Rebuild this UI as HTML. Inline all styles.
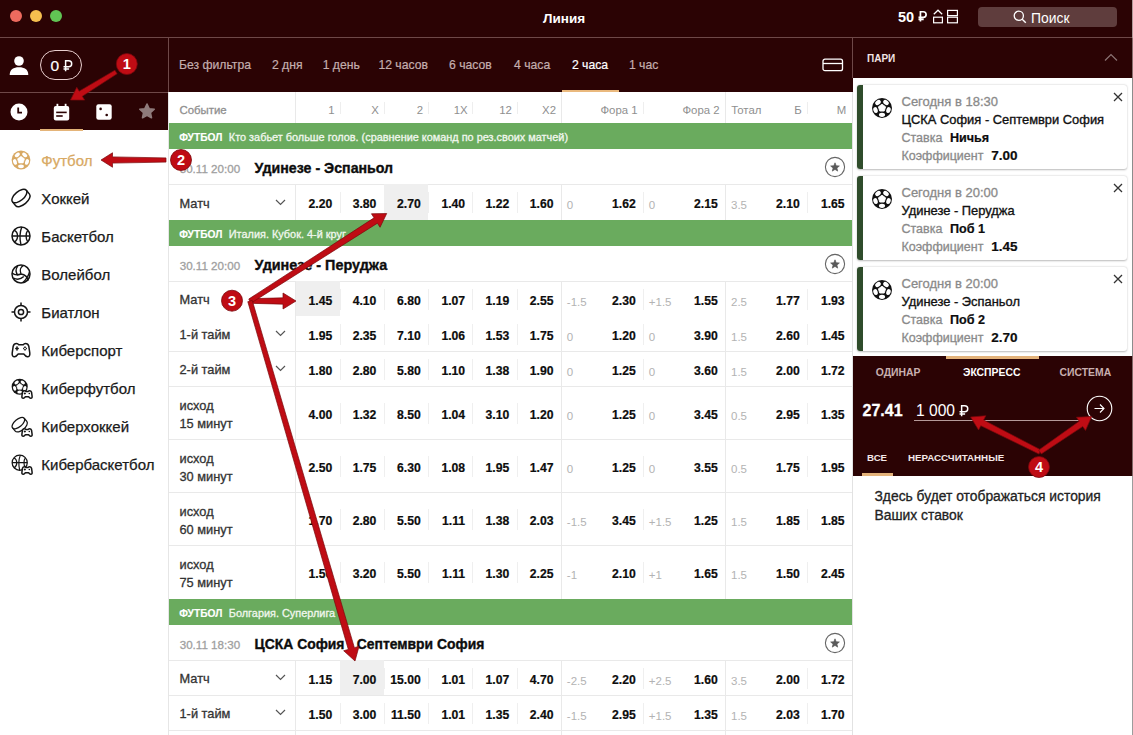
<!DOCTYPE html><html><head><meta charset="utf-8"><style>
*{margin:0;padding:0;box-sizing:border-box}
html,body{width:1133px;height:735px;overflow:hidden;background:#fff;font-family:"Liberation Sans",sans-serif;position:relative}
.a{position:absolute}
.nw{white-space:nowrap}
.rub{position:relative;display:inline-block;line-height:1;transform:scaleX(.84);transform-origin:0 50%}
.rub:after{content:"";position:absolute;left:-0.07em;width:0.55em;top:0.645em;height:0.085em;background:currentColor}
.cell{position:absolute;white-space:nowrap;text-align:right}
</style></head><body>
<div class="a" style="left:0;top:0;width:1133px;height:38px;background:#2b0304"></div>
<div class="a" style="left:0;top:37px;width:1133px;height:1px;background:#6e4848"></div>
<div class="a" style="left:10px;top:10px;width:12px;height:12px;border-radius:50%;background:#ed6a5e"></div>
<div class="a" style="left:30px;top:10px;width:12px;height:12px;border-radius:50%;background:#f5bf4f"></div>
<div class="a" style="left:50px;top:10px;width:12px;height:12px;border-radius:50%;background:#61c554"></div>
<div class="a nw" style="left:543px;top:10.5px;font-size:13.5px;font-weight:700;color:#fff">Линия</div>
<div class="a nw" style="left:898px;top:9px;font-size:14.5px;font-weight:700;color:#fff">50 <svg style="display:inline-block;height:0.729em;width:0.6em;vertical-align:0;overflow:visible" viewBox="0 0 10.5 13"><path d="M2.9 13 V0.9 H6.4 C8.7 0.9 9.9 2.5 9.9 4.35 C9.9 6.2 8.7 7.8 6.4 7.8 H0.5 M0.5 10.3 H6.9" fill="none" stroke="currentColor" stroke-width="2.1"/></svg></div>
<svg class="a" style="left:932px;top:9px" width="28" height="15" viewBox="0 0 28 15"><path d="M1.8 5.2 L6 1.2 L10.2 5.2" fill="none" stroke="#fff" stroke-width="1.2"/><rect x="1.6" y="8.2" width="8.8" height="5.6" fill="none" stroke="#fff" stroke-width="1.2"/><rect x="15.6" y="1.4" width="9.8" height="5.2" fill="none" stroke="#fff" stroke-width="1.2"/><rect x="15.6" y="8.2" width="9.8" height="5.6" fill="none" stroke="#fff" stroke-width="1.2"/></svg>
<div class="a" style="left:978px;top:7px;width:139px;height:20px;border-radius:4px;background:#5f3d3d"></div>
<svg class="a" style="left:1013px;top:10px" width="14" height="14" viewBox="0 0 14 14"><circle cx="5.8" cy="5.8" r="4.6" fill="none" stroke="#fff" stroke-width="1.3"/><path d="M9.2 9.2 L12.8 12.8" stroke="#fff" stroke-width="1.4"/></svg>
<div class="a nw" style="left:1031px;top:9.6px;font-size:13.9px;color:#fff">Поиск</div>
<div class="a" style="left:0;top:38px;width:168px;height:92px;background:#2b0304"></div>
<div class="a" style="left:0;top:92px;width:168px;height:1px;background:#6e4848"></div>
<div class="a" style="left:168px;top:38px;width:1px;height:54px;background:#6e4848"></div>
<div class="a" style="left:168px;top:92px;width:1px;height:643px;background:#e6e6e6"></div>
<svg class="a" style="left:9px;top:55px" width="20" height="21" viewBox="0 0 20 21"><circle cx="10" cy="6" r="4.8" fill="#fff"/><path d="M0.7 20 C0.7 14.5 4.5 12.3 10 12.3 C15.5 12.3 19.3 14.5 19.3 20 Z" fill="#fff"/></svg>
<div class="a" style="left:40px;top:50px;width:42px;height:30px;border:1px solid #e9cfcf;border-radius:15px"></div>
<div class="a nw" style="left:50.5px;top:57px;font-size:15.5px;color:#fff;-webkit-text-stroke:0.2px #fff">0 <svg style="display:inline-block;height:0.729em;width:0.6em;vertical-align:0;overflow:visible" viewBox="0 0 10.5 13"><path d="M2.9 13 V0.9 H6.4 C8.7 0.9 9.9 2.5 9.9 4.35 C9.9 6.2 8.7 7.8 6.4 7.8 H0.5 M0.5 10.3 H6.9" fill="none" stroke="currentColor" stroke-width="1.7"/></svg></div>
<svg class="a" style="left:10px;top:103px" width="18" height="18" viewBox="0 0 18 18"><circle cx="9" cy="9" r="8.5" fill="#fff"/><path d="M8.2 4.5 V9.6 H12" fill="none" stroke="#2b0304" stroke-width="1.8"/></svg>
<svg class="a" style="left:53px;top:103px" width="17" height="18" viewBox="0 0 17 18"><rect x="0.8" y="3" width="15.4" height="14.5" rx="2" fill="#fff"/><rect x="3.5" y="0.8" width="1.8" height="3.5" fill="#fff"/><rect x="11.7" y="0.8" width="1.8" height="3.5" fill="#fff"/><rect x="3.2" y="8.6" width="10.5" height="1.6" fill="#2b0304"/><rect x="3.2" y="12.2" width="6.5" height="1.6" fill="#2b0304"/></svg>
<div class="a" style="left:40px;top:128.5px;width:43px;height:2px;background:#e4b479"></div>
<svg class="a" style="left:96px;top:104px" width="16" height="16" viewBox="0 0 16 16"><rect x="0.3" y="0.3" width="15.4" height="15.4" rx="2.2" fill="#fff"/><circle cx="4.6" cy="4.9" r="1.3" fill="#2b0304"/><circle cx="10.7" cy="11" r="1.3" fill="#2b0304"/></svg>
<svg class="a" style="left:137px;top:101px" width="20" height="20" viewBox="0 0 20 20"><path d="M10.00 3.00 L12.12 7.69 L17.23 8.25 L13.42 11.71 L14.47 16.75 L10.00 14.20 L5.53 16.75 L6.58 11.71 L2.77 8.25 L7.88 7.69 Z" fill="#8f7b7b" stroke="#8f7b7b" stroke-width="1.6" stroke-linejoin="round"/></svg>
<svg class="a" style="left:11px;top:150px" width="22" height="22" viewBox="0 0 22 22"><circle cx="10" cy="10" r="9.40" fill="#d8a964"/><path d="M10.00 6.30 L13.52 8.86 L12.17 12.99 L7.83 12.99 L6.48 8.86 Z" fill="#fff" stroke="#fff" stroke-width="0.57" stroke-linejoin="round"/><ellipse cx="13.70" cy="4.90" rx="1.85" ry="2.90" transform="rotate(-54.0 13.70 4.90)" fill="#fff"/><ellipse cx="15.99" cy="11.95" rx="1.85" ry="2.90" transform="rotate(18.0 15.99 11.95)" fill="#fff"/><ellipse cx="10.00" cy="16.30" rx="1.85" ry="2.90" transform="rotate(90.0 10.00 16.30)" fill="#fff"/><ellipse cx="4.01" cy="11.95" rx="1.85" ry="2.90" transform="rotate(162.0 4.01 11.95)" fill="#fff"/><ellipse cx="6.30" cy="4.90" rx="1.85" ry="2.90" transform="rotate(234.0 6.30 4.90)" fill="#fff"/></svg>
<div class="a nw" style="left:41.3px;top:150.94px;font-size:15px;line-height:19px;font-weight:400;color:#d8a964;-webkit-text-stroke:0.25px currentColor">Футбол</div>
<svg class="a" style="left:11px;top:188px" width="22" height="22" viewBox="0 0 22 22"><g transform="rotate(-40 10 10)"><ellipse cx="10" cy="7.5" rx="9" ry="4.5" fill="none" stroke="#151515" stroke-width="1.5"/><path d="M1 7.5 V12.5 A9 4.5 0 0 0 19 12.5 V7.5" fill="none" stroke="#151515" stroke-width="1.5"/></g></svg>
<div class="a nw" style="left:41.3px;top:188.94px;font-size:15px;line-height:19px;font-weight:400;color:#1a1a1a;-webkit-text-stroke:0.25px currentColor">Хоккей</div>
<svg class="a" style="left:11px;top:226px" width="22" height="22" viewBox="0 0 22 22"><circle cx="10" cy="10" r="9" fill="none" stroke="#151515" stroke-width="1.5"/><path d="M1 10 H19 M10.8 1 C8.8 6 8.8 14 10 19 M3.2 4.2 C7.5 6.5 7.8 13.5 3.2 16.2 M16.6 4.6 C14.6 7 14.6 13 16.6 15.6" fill="none" stroke="#151515" stroke-width="1.4"/></svg>
<div class="a nw" style="left:41.3px;top:226.94px;font-size:15px;line-height:19px;font-weight:400;color:#1a1a1a;-webkit-text-stroke:0.25px currentColor">Баскетбол</div>
<svg class="a" style="left:11px;top:264px" width="22" height="22" viewBox="0 0 22 22"><circle cx="10" cy="10" r="9" fill="none" stroke="#151515" stroke-width="1.5"/><path d="M10 10 C8.5 6.5 9.5 3 12.5 1.4 M6.8 1.8 C4.6 4.8 4.8 8.8 7.2 11.6 M10 10 C6 11.5 3.2 11 1.2 9 M2.4 14.2 C6 15.8 10 15.2 12.8 12.6 M10 10 C13.8 10.5 16.5 13 17.2 16.6 M18.6 7.6 C17.6 11.6 15.2 15.6 11.6 18.8" fill="none" stroke="#151515" stroke-width="1.4"/></svg>
<div class="a nw" style="left:41.3px;top:264.94px;font-size:15px;line-height:19px;font-weight:400;color:#1a1a1a;-webkit-text-stroke:0.25px currentColor">Волейбол</div>
<svg class="a" style="left:11px;top:302px" width="22" height="22" viewBox="0 0 22 22"><circle cx="10" cy="10" r="6.5" fill="none" stroke="#151515" stroke-width="1.5"/><circle cx="10" cy="10" r="2.6" fill="none" stroke="#151515" stroke-width="1.5"/><path d="M10 0.5 V3.5 M10 16.5 V19.5 M0.5 10 H3.5 M16.5 10 H19.5" stroke="#151515" stroke-width="1.5"/></svg>
<div class="a nw" style="left:41.3px;top:302.94px;font-size:15px;line-height:19px;font-weight:400;color:#1a1a1a;-webkit-text-stroke:0.25px currentColor">Биатлон</div>
<svg class="a" style="left:11px;top:340px" width="22" height="22" viewBox="0 0 22 22"><path d="M5.5 3.5 Q3 3.5 2.2 6.2 L1.2 13.2 Q0.9 16.9 3.6 16.8 Q5.2 16.6 7.2 14 H12.8 Q14.8 16.6 16.4 16.8 Q19.1 16.9 18.8 13.2 L17.8 6.2 Q17 3.5 14.5 3.5 Q13 3.5 12.2 4.8 H7.8 Q7 3.5 5.5 3.5 Z" fill="none" stroke="#151515" stroke-width="1.5" stroke-linejoin="round"/><path d="M6 6.3 Q6.3 8.2 8 8.5 Q6.3 8.8 6 10.7 Q5.7 8.8 4 8.5 Q5.7 8.2 6 6.3 Z" fill="#151515" stroke="#151515" stroke-width="0.6"/><path d="M14 6.5 Q14.3 8.2 16 8.5 Q14.3 8.8 14 10.5 Q13.7 8.8 12 8.5 Q13.7 8.2 14 6.5 Z" fill="none" stroke="#151515" stroke-width="0.9"/></svg>
<div class="a nw" style="left:41.3px;top:340.94px;font-size:15px;line-height:19px;font-weight:400;color:#1a1a1a;-webkit-text-stroke:0.25px currentColor">Киберспорт</div>
<svg class="a" style="left:11px;top:378px" width="22" height="22" viewBox="0 0 22 22"><g transform="translate(0.3 0.3) scale(0.84)"><circle cx="10" cy="10" r="9.60" fill="#151515"/><path d="M10.00 6.30 L13.52 8.86 L12.17 12.99 L7.83 12.99 L6.48 8.86 Z" fill="#fff" stroke="#fff" stroke-width="0.80" stroke-linejoin="round"/><ellipse cx="13.70" cy="4.90" rx="1.85" ry="2.90" transform="rotate(-54.0 13.70 4.90)" fill="#fff"/><ellipse cx="15.99" cy="11.95" rx="1.85" ry="2.90" transform="rotate(18.0 15.99 11.95)" fill="#fff"/><ellipse cx="10.00" cy="16.30" rx="1.85" ry="2.90" transform="rotate(90.0 10.00 16.30)" fill="#fff"/><ellipse cx="4.01" cy="11.95" rx="1.85" ry="2.90" transform="rotate(162.0 4.01 11.95)" fill="#fff"/><ellipse cx="6.30" cy="4.90" rx="1.85" ry="2.90" transform="rotate(234.0 6.30 4.90)" fill="#fff"/></g><g transform="translate(10.2 10.6) scale(0.58)"><path d="M5.5 3.5 Q3 3.5 2.2 6.2 L1.2 13.2 Q0.9 16.9 3.6 16.8 Q5.2 16.6 7.2 14 H12.8 Q14.8 16.6 16.4 16.8 Q19.1 16.9 18.8 13.2 L17.8 6.2 Q17 3.5 14.5 3.5 Q13 3.5 12.2 4.8 H7.8 Q7 3.5 5.5 3.5 Z" fill="#fff" stroke="#151515" stroke-width="2.6" stroke-linejoin="round"/><path d="M4.5 8.5 H8 M6.25 6.7 V10.3" stroke="#151515" stroke-width="1.8"/><circle cx="14" cy="8.5" r="1.4" fill="#151515"/></g></svg>
<div class="a nw" style="left:41.3px;top:378.94px;font-size:15px;line-height:19px;font-weight:400;color:#1a1a1a;-webkit-text-stroke:0.25px currentColor">Киберфутбол</div>
<svg class="a" style="left:11px;top:416px" width="22" height="22" viewBox="0 0 22 22"><g transform="translate(0.3 0.3) scale(0.84)"><g transform="rotate(-40 10 10)"><ellipse cx="10" cy="7.5" rx="9" ry="4.5" fill="none" stroke="#151515" stroke-width="1.5"/><path d="M1 7.5 V12.5 A9 4.5 0 0 0 19 12.5 V7.5" fill="none" stroke="#151515" stroke-width="1.5"/></g></g><g transform="translate(10.2 10.6) scale(0.58)"><path d="M5.5 3.5 Q3 3.5 2.2 6.2 L1.2 13.2 Q0.9 16.9 3.6 16.8 Q5.2 16.6 7.2 14 H12.8 Q14.8 16.6 16.4 16.8 Q19.1 16.9 18.8 13.2 L17.8 6.2 Q17 3.5 14.5 3.5 Q13 3.5 12.2 4.8 H7.8 Q7 3.5 5.5 3.5 Z" fill="#fff" stroke="#151515" stroke-width="2.6" stroke-linejoin="round"/><path d="M4.5 8.5 H8 M6.25 6.7 V10.3" stroke="#151515" stroke-width="1.8"/><circle cx="14" cy="8.5" r="1.4" fill="#151515"/></g></svg>
<div class="a nw" style="left:41.3px;top:416.94px;font-size:15px;line-height:19px;font-weight:400;color:#1a1a1a;-webkit-text-stroke:0.25px currentColor">Киберхоккей</div>
<svg class="a" style="left:11px;top:454px" width="22" height="22" viewBox="0 0 22 22"><g transform="translate(0.3 0.3) scale(0.84)"><circle cx="10" cy="10" r="9" fill="none" stroke="#151515" stroke-width="1.5"/><path d="M1 10 H19 M10.8 1 C8.8 6 8.8 14 10 19 M3.2 4.2 C7.5 6.5 7.8 13.5 3.2 16.2 M16.6 4.6 C14.6 7 14.6 13 16.6 15.6" fill="none" stroke="#151515" stroke-width="1.4"/></g><g transform="translate(10.2 10.6) scale(0.58)"><path d="M5.5 3.5 Q3 3.5 2.2 6.2 L1.2 13.2 Q0.9 16.9 3.6 16.8 Q5.2 16.6 7.2 14 H12.8 Q14.8 16.6 16.4 16.8 Q19.1 16.9 18.8 13.2 L17.8 6.2 Q17 3.5 14.5 3.5 Q13 3.5 12.2 4.8 H7.8 Q7 3.5 5.5 3.5 Z" fill="#fff" stroke="#151515" stroke-width="2.6" stroke-linejoin="round"/><path d="M4.5 8.5 H8 M6.25 6.7 V10.3" stroke="#151515" stroke-width="1.8"/><circle cx="14" cy="8.5" r="1.4" fill="#151515"/></g></svg>
<div class="a nw" style="left:41.3px;top:454.94px;font-size:15px;line-height:19px;font-weight:400;color:#1a1a1a;-webkit-text-stroke:0.25px currentColor">Кибербаскетбол</div>
<div class="a" style="left:169px;top:38px;width:683px;height:54px;background:#2b0304"></div>
<div class="a" style="left:852px;top:38px;width:1px;height:40px;background:#6e4848"></div>
<div class="a" style="left:852px;top:78px;width:1px;height:14px;background:#2b0304"></div>
<div class="a nw" style="left:179px;top:57.67px;font-size:12.2px;line-height:15px;font-weight:400;color:#c4aeae;-webkit-text-stroke:0.2px currentColor">Без фильтра</div>
<div class="a nw" style="left:271.9px;top:57.67px;font-size:12.2px;line-height:15px;font-weight:400;color:#c4aeae;-webkit-text-stroke:0.2px currentColor">2 дня</div>
<div class="a nw" style="left:322.7px;top:57.67px;font-size:12.2px;line-height:15px;font-weight:400;color:#c4aeae;-webkit-text-stroke:0.2px currentColor">1 день</div>
<div class="a nw" style="left:378.4px;top:57.67px;font-size:12.2px;line-height:15px;font-weight:400;color:#c4aeae;-webkit-text-stroke:0.2px currentColor">12 часов</div>
<div class="a nw" style="left:449px;top:57.67px;font-size:12.2px;line-height:15px;font-weight:400;color:#c4aeae;-webkit-text-stroke:0.2px currentColor">6 часов</div>
<div class="a nw" style="left:514px;top:57.67px;font-size:12.2px;line-height:15px;font-weight:400;color:#c4aeae;-webkit-text-stroke:0.2px currentColor">4 часа</div>
<div class="a nw" style="left:571.9px;top:57.67px;font-size:12.2px;line-height:15px;font-weight:400;color:#fff;-webkit-text-stroke:0.2px currentColor">2 часа</div>
<div class="a nw" style="left:628.9px;top:57.67px;font-size:12.2px;line-height:15px;font-weight:400;color:#c4aeae;-webkit-text-stroke:0.2px currentColor">1 час</div>
<div class="a" style="left:562px;top:90px;width:57px;height:2px;background:#eab97e"></div>
<svg class="a" style="left:822px;top:58px" width="22" height="14" viewBox="0 0 22 14"><rect x="1" y="1.2" width="19.5" height="11.5" rx="2" fill="none" stroke="#fff" stroke-width="1.3"/><path d="M1 5.5 H20.5" stroke="#fff" stroke-width="1.3"/></svg>
<div class="a nw" style="left:179.5px;top:102.73px;font-size:11.4px;line-height:14px;font-weight:400;color:#8f8f8f;-webkit-text-stroke:0.3px currentColor">Событие</div>
<div class="a" style="left:295.0px;top:92px;width:1px;height:31px;background:#e9e9e9"></div>
<div class="a nw" style="right:798.3px;top:102.73px;font-size:11.4px;line-height:14px;font-weight:400;color:#8f8f8f;text-align:right;">1</div>
<div class="a nw" style="right:754.1px;top:102.73px;font-size:11.4px;line-height:14px;font-weight:400;color:#8f8f8f;text-align:right;">X</div>
<div class="a nw" style="right:709.8px;top:102.73px;font-size:11.4px;line-height:14px;font-weight:400;color:#8f8f8f;text-align:right;">2</div>
<div class="a nw" style="right:665.4000000000001px;top:102.73px;font-size:11.4px;line-height:14px;font-weight:400;color:#8f8f8f;text-align:right;">1X</div>
<div class="a nw" style="right:621.2px;top:102.73px;font-size:11.4px;line-height:14px;font-weight:400;color:#8f8f8f;text-align:right;">12</div>
<div class="a nw" style="right:577.0px;top:102.73px;font-size:11.4px;line-height:14px;font-weight:400;color:#8f8f8f;text-align:right;">X2</div>
<div class="a nw" style="right:495.4px;top:102.73px;font-size:11.4px;line-height:14px;font-weight:400;color:#8f8f8f;text-align:right;">Фора 1</div>
<div class="a nw" style="right:413.4px;top:102.73px;font-size:11.4px;line-height:14px;font-weight:400;color:#8f8f8f;text-align:right;">Фора 2</div>
<div class="a nw" style="left:731.2px;top:102.73px;font-size:11.4px;line-height:14px;font-weight:400;color:#8f8f8f;">Тотал</div>
<div class="a nw" style="right:331.20000000000005px;top:102.73px;font-size:11.4px;line-height:14px;font-weight:400;color:#8f8f8f;text-align:right;">Б</div>
<div class="a nw" style="right:286.70000000000005px;top:102.73px;font-size:11.4px;line-height:14px;font-weight:400;color:#8f8f8f;text-align:right;">М</div>
<div class="a" style="left:339.5px;top:102px;width:1px;height:12px;background:#eeeeee"></div>
<div class="a" style="left:383.7px;top:102px;width:1px;height:12px;background:#eeeeee"></div>
<div class="a" style="left:428.0px;top:102px;width:1px;height:12px;background:#eeeeee"></div>
<div class="a" style="left:472.4px;top:102px;width:1px;height:12px;background:#eeeeee"></div>
<div class="a" style="left:516.6px;top:102px;width:1px;height:12px;background:#eeeeee"></div>
<div class="a" style="left:643.0px;top:102px;width:1px;height:12px;background:#eeeeee"></div>
<div class="a" style="left:807.0px;top:102px;width:1px;height:12px;background:#eeeeee"></div>
<div class="a" style="left:560.8px;top:92px;width:1px;height:31px;background:#e9e9e9"></div>
<div class="a" style="left:724.8px;top:92px;width:1px;height:31px;background:#e9e9e9"></div>
<div class="a" style="left:169px;top:123px;width:683px;height:26px;background:#6aab5e"></div>
<div class="a nw" style="left:179.3px;top:130.93px;font-size:10.2px;line-height:13px;font-weight:700;color:#fff;-webkit-text-stroke:0.15px #fff">ФУТБОЛ</div>
<div class="a nw" style="left:228.8px;top:130.20px;font-size:10.9px;line-height:14px;font-weight:400;color:#f1f7ee;-webkit-text-stroke:0.3px #f1f7ee">Кто забьет больше голов. (сравнение команд по рез.своих матчей)</div>
<div class="a nw" style="left:179.7px;top:161.77px;font-size:11.6px;line-height:14px;font-weight:400;color:#a0a0a0;-webkit-text-stroke:0.3px currentColor">30.11 20:00</div>
<div class="a nw" style="left:254.6px;top:159.11px;font-size:14.2px;line-height:18px;font-weight:700;color:#0d0d0d;-webkit-text-stroke:0.35px #0d0d0d">Удинезе - Эспаньол</div>
<svg class="a" style="left:823.6px;top:155.9px" width="22" height="22" viewBox="0 0 22 22"><circle cx="11" cy="11" r="9.6" fill="#fff" stroke="#666" stroke-width="1.1"/><path d="M11.00 6.80 L12.18 9.78 L15.37 9.98 L12.90 12.02 L13.70 15.12 L11.00 13.40 L8.30 15.12 L9.10 12.02 L6.63 9.98 L9.82 9.78 Z" fill="#5a5a5a" stroke="#5a5a5a" stroke-width="0.7" stroke-linejoin="round"/></svg>
<div class="a" style="left:169px;top:184px;width:683px;height:1px;background:#e9e9e9"></div>
<div class="a" style="left:384.2px;top:184px;width:44.30000000000001px;height:36px;background:#efefef"></div>
<div class="a nw" style="left:179.5px;top:195.97px;font-size:12.8px;line-height:16px;font-weight:400;color:#333;-webkit-text-stroke:0.3px currentColor">Матч</div>
<svg class="a" style="left:275px;top:198.5px" width="11" height="7" viewBox="0 0 11 7"><path d="M1 1 L5.5 5.5 L10 1" fill="none" stroke="#555" stroke-width="1.2"/></svg>
<div class="a" style="left:295.0px;top:184px;width:1px;height:36px;background:#e9e9e9"></div>
<div class="a" style="left:560.8px;top:184px;width:1px;height:36px;background:#e9e9e9"></div>
<div class="a" style="left:724.8px;top:184px;width:1px;height:36px;background:#e9e9e9"></div>
<div class="a" style="left:339.5px;top:192px;width:1px;height:21px;background:#efefef"></div>
<div class="a" style="left:383.7px;top:192px;width:1px;height:21px;background:#efefef"></div>
<div class="a" style="left:428.0px;top:192px;width:1px;height:21px;background:#efefef"></div>
<div class="a" style="left:472.4px;top:192px;width:1px;height:21px;background:#efefef"></div>
<div class="a" style="left:516.6px;top:192px;width:1px;height:21px;background:#efefef"></div>
<div class="a" style="left:643.0px;top:192px;width:1px;height:21px;background:#efefef"></div>
<div class="a" style="left:807.0px;top:192px;width:1px;height:21px;background:#efefef"></div>
<div class="a nw" style="right:800.8px;top:197.27px;font-size:12.2px;line-height:15px;font-weight:700;color:#0d0d0d;text-align:right;-webkit-text-stroke:0.2px #0d0d0d">2.20</div>
<div class="a nw" style="right:756.6px;top:197.27px;font-size:12.2px;line-height:15px;font-weight:700;color:#0d0d0d;text-align:right;-webkit-text-stroke:0.2px #0d0d0d">3.80</div>
<div class="a nw" style="right:712.3px;top:197.27px;font-size:12.2px;line-height:15px;font-weight:700;color:#0d0d0d;text-align:right;-webkit-text-stroke:0.2px #0d0d0d">2.70</div>
<div class="a nw" style="right:667.9000000000001px;top:197.27px;font-size:12.2px;line-height:15px;font-weight:700;color:#0d0d0d;text-align:right;-webkit-text-stroke:0.2px #0d0d0d">1.40</div>
<div class="a nw" style="right:623.7px;top:197.27px;font-size:12.2px;line-height:15px;font-weight:700;color:#0d0d0d;text-align:right;-webkit-text-stroke:0.2px #0d0d0d">1.22</div>
<div class="a nw" style="right:579.5px;top:197.27px;font-size:12.2px;line-height:15px;font-weight:700;color:#0d0d0d;text-align:right;-webkit-text-stroke:0.2px #0d0d0d">1.60</div>
<div class="a nw" style="left:566.8px;top:198.00px;font-size:11.5px;line-height:14px;font-weight:400;color:#b3b3b3;">0</div>
<div class="a nw" style="right:497.29999999999995px;top:197.27px;font-size:12.2px;line-height:15px;font-weight:700;color:#0d0d0d;text-align:right;-webkit-text-stroke:0.2px #0d0d0d">1.62</div>
<div class="a nw" style="left:648.8px;top:198.00px;font-size:11.5px;line-height:14px;font-weight:400;color:#b3b3b3;">0</div>
<div class="a nw" style="right:415.29999999999995px;top:197.27px;font-size:12.2px;line-height:15px;font-weight:700;color:#0d0d0d;text-align:right;-webkit-text-stroke:0.2px #0d0d0d">2.15</div>
<div class="a nw" style="left:731.0px;top:198.00px;font-size:11.5px;line-height:14px;font-weight:400;color:#b3b3b3;">3.5</div>
<div class="a nw" style="right:333.29999999999995px;top:197.27px;font-size:12.2px;line-height:15px;font-weight:700;color:#0d0d0d;text-align:right;-webkit-text-stroke:0.2px #0d0d0d">2.10</div>
<div class="a nw" style="right:288.4px;top:197.27px;font-size:12.2px;line-height:15px;font-weight:700;color:#0d0d0d;text-align:right;-webkit-text-stroke:0.2px #0d0d0d">1.65</div>
<div class="a" style="left:169px;top:220px;width:683px;height:26px;background:#6aab5e"></div>
<div class="a nw" style="left:179.3px;top:227.93px;font-size:10.2px;line-height:13px;font-weight:700;color:#fff;-webkit-text-stroke:0.15px #fff">ФУТБОЛ</div>
<div class="a nw" style="left:228.8px;top:227.20px;font-size:10.9px;line-height:14px;font-weight:400;color:#f1f7ee;-webkit-text-stroke:0.3px #f1f7ee">Италия. Кубок. 4-й круг</div>
<div class="a nw" style="left:179.7px;top:258.77px;font-size:11.6px;line-height:14px;font-weight:400;color:#a0a0a0;-webkit-text-stroke:0.3px currentColor">30.11 20:00</div>
<div class="a nw" style="left:254.6px;top:256.04px;font-size:14.4px;line-height:18px;font-weight:700;color:#0d0d0d;-webkit-text-stroke:0.35px #0d0d0d">Удинезе - Перуджа</div>
<svg class="a" style="left:823.6px;top:252.89999999999998px" width="22" height="22" viewBox="0 0 22 22"><circle cx="11" cy="11" r="9.6" fill="#fff" stroke="#666" stroke-width="1.1"/><path d="M11.00 6.80 L12.18 9.78 L15.37 9.98 L12.90 12.02 L13.70 15.12 L11.00 13.40 L8.30 15.12 L9.10 12.02 L6.63 9.98 L9.82 9.78 Z" fill="#5a5a5a" stroke="#5a5a5a" stroke-width="0.7" stroke-linejoin="round"/></svg>
<div class="a" style="left:169px;top:281px;width:683px;height:1px;background:#e9e9e9"></div>
<div class="a" style="left:295.5px;top:281px;width:44.5px;height:35px;background:#efefef"></div>
<div class="a nw" style="left:179.5px;top:292.47px;font-size:12.8px;line-height:16px;font-weight:400;color:#333;-webkit-text-stroke:0.3px currentColor">Матч</div>
<div class="a" style="left:295.0px;top:281px;width:1px;height:35px;background:#e9e9e9"></div>
<div class="a" style="left:560.8px;top:281px;width:1px;height:35px;background:#e9e9e9"></div>
<div class="a" style="left:724.8px;top:281px;width:1px;height:35px;background:#e9e9e9"></div>
<div class="a" style="left:339.5px;top:289px;width:1px;height:21px;background:#efefef"></div>
<div class="a" style="left:383.7px;top:289px;width:1px;height:21px;background:#efefef"></div>
<div class="a" style="left:428.0px;top:289px;width:1px;height:21px;background:#efefef"></div>
<div class="a" style="left:472.4px;top:289px;width:1px;height:21px;background:#efefef"></div>
<div class="a" style="left:516.6px;top:289px;width:1px;height:21px;background:#efefef"></div>
<div class="a" style="left:643.0px;top:289px;width:1px;height:21px;background:#efefef"></div>
<div class="a" style="left:807.0px;top:289px;width:1px;height:21px;background:#efefef"></div>
<div class="a nw" style="right:800.8px;top:293.77px;font-size:12.2px;line-height:15px;font-weight:700;color:#0d0d0d;text-align:right;-webkit-text-stroke:0.2px #0d0d0d">1.45</div>
<div class="a nw" style="right:756.6px;top:293.77px;font-size:12.2px;line-height:15px;font-weight:700;color:#0d0d0d;text-align:right;-webkit-text-stroke:0.2px #0d0d0d">4.10</div>
<div class="a nw" style="right:712.3px;top:293.77px;font-size:12.2px;line-height:15px;font-weight:700;color:#0d0d0d;text-align:right;-webkit-text-stroke:0.2px #0d0d0d">6.80</div>
<div class="a nw" style="right:667.9000000000001px;top:293.77px;font-size:12.2px;line-height:15px;font-weight:700;color:#0d0d0d;text-align:right;-webkit-text-stroke:0.2px #0d0d0d">1.07</div>
<div class="a nw" style="right:623.7px;top:293.77px;font-size:12.2px;line-height:15px;font-weight:700;color:#0d0d0d;text-align:right;-webkit-text-stroke:0.2px #0d0d0d">1.19</div>
<div class="a nw" style="right:579.5px;top:293.77px;font-size:12.2px;line-height:15px;font-weight:700;color:#0d0d0d;text-align:right;-webkit-text-stroke:0.2px #0d0d0d">2.55</div>
<div class="a nw" style="left:566.8px;top:294.50px;font-size:11.5px;line-height:14px;font-weight:400;color:#b3b3b3;">-1.5</div>
<div class="a nw" style="right:497.29999999999995px;top:293.77px;font-size:12.2px;line-height:15px;font-weight:700;color:#0d0d0d;text-align:right;-webkit-text-stroke:0.2px #0d0d0d">2.30</div>
<div class="a nw" style="left:648.8px;top:294.50px;font-size:11.5px;line-height:14px;font-weight:400;color:#b3b3b3;">+1.5</div>
<div class="a nw" style="right:415.29999999999995px;top:293.77px;font-size:12.2px;line-height:15px;font-weight:700;color:#0d0d0d;text-align:right;-webkit-text-stroke:0.2px #0d0d0d">1.55</div>
<div class="a nw" style="left:731.0px;top:294.50px;font-size:11.5px;line-height:14px;font-weight:400;color:#b3b3b3;">2.5</div>
<div class="a nw" style="right:333.29999999999995px;top:293.77px;font-size:12.2px;line-height:15px;font-weight:700;color:#0d0d0d;text-align:right;-webkit-text-stroke:0.2px #0d0d0d">1.77</div>
<div class="a nw" style="right:288.4px;top:293.77px;font-size:12.2px;line-height:15px;font-weight:700;color:#0d0d0d;text-align:right;-webkit-text-stroke:0.2px #0d0d0d">1.93</div>
<div class="a nw" style="left:179.5px;top:327.47px;font-size:12.8px;line-height:16px;font-weight:400;color:#333;-webkit-text-stroke:0.3px currentColor">1-й тайм</div>
<svg class="a" style="left:275px;top:330.0px" width="11" height="7" viewBox="0 0 11 7"><path d="M1 1 L5.5 5.5 L10 1" fill="none" stroke="#555" stroke-width="1.2"/></svg>
<div class="a" style="left:295.0px;top:316px;width:1px;height:35px;background:#e9e9e9"></div>
<div class="a" style="left:560.8px;top:316px;width:1px;height:35px;background:#e9e9e9"></div>
<div class="a" style="left:724.8px;top:316px;width:1px;height:35px;background:#e9e9e9"></div>
<div class="a" style="left:339.5px;top:324px;width:1px;height:21px;background:#efefef"></div>
<div class="a" style="left:383.7px;top:324px;width:1px;height:21px;background:#efefef"></div>
<div class="a" style="left:428.0px;top:324px;width:1px;height:21px;background:#efefef"></div>
<div class="a" style="left:472.4px;top:324px;width:1px;height:21px;background:#efefef"></div>
<div class="a" style="left:516.6px;top:324px;width:1px;height:21px;background:#efefef"></div>
<div class="a" style="left:643.0px;top:324px;width:1px;height:21px;background:#efefef"></div>
<div class="a" style="left:807.0px;top:324px;width:1px;height:21px;background:#efefef"></div>
<div class="a nw" style="right:800.8px;top:328.77px;font-size:12.2px;line-height:15px;font-weight:700;color:#0d0d0d;text-align:right;-webkit-text-stroke:0.2px #0d0d0d">1.95</div>
<div class="a nw" style="right:756.6px;top:328.77px;font-size:12.2px;line-height:15px;font-weight:700;color:#0d0d0d;text-align:right;-webkit-text-stroke:0.2px #0d0d0d">2.35</div>
<div class="a nw" style="right:712.3px;top:328.77px;font-size:12.2px;line-height:15px;font-weight:700;color:#0d0d0d;text-align:right;-webkit-text-stroke:0.2px #0d0d0d">7.10</div>
<div class="a nw" style="right:667.9000000000001px;top:328.77px;font-size:12.2px;line-height:15px;font-weight:700;color:#0d0d0d;text-align:right;-webkit-text-stroke:0.2px #0d0d0d">1.06</div>
<div class="a nw" style="right:623.7px;top:328.77px;font-size:12.2px;line-height:15px;font-weight:700;color:#0d0d0d;text-align:right;-webkit-text-stroke:0.2px #0d0d0d">1.53</div>
<div class="a nw" style="right:579.5px;top:328.77px;font-size:12.2px;line-height:15px;font-weight:700;color:#0d0d0d;text-align:right;-webkit-text-stroke:0.2px #0d0d0d">1.75</div>
<div class="a nw" style="left:566.8px;top:329.50px;font-size:11.5px;line-height:14px;font-weight:400;color:#b3b3b3;">0</div>
<div class="a nw" style="right:497.29999999999995px;top:328.77px;font-size:12.2px;line-height:15px;font-weight:700;color:#0d0d0d;text-align:right;-webkit-text-stroke:0.2px #0d0d0d">1.20</div>
<div class="a nw" style="left:648.8px;top:329.50px;font-size:11.5px;line-height:14px;font-weight:400;color:#b3b3b3;">0</div>
<div class="a nw" style="right:415.29999999999995px;top:328.77px;font-size:12.2px;line-height:15px;font-weight:700;color:#0d0d0d;text-align:right;-webkit-text-stroke:0.2px #0d0d0d">3.90</div>
<div class="a nw" style="left:731.0px;top:329.50px;font-size:11.5px;line-height:14px;font-weight:400;color:#b3b3b3;">1.5</div>
<div class="a nw" style="right:333.29999999999995px;top:328.77px;font-size:12.2px;line-height:15px;font-weight:700;color:#0d0d0d;text-align:right;-webkit-text-stroke:0.2px #0d0d0d">2.60</div>
<div class="a nw" style="right:288.4px;top:328.77px;font-size:12.2px;line-height:15px;font-weight:700;color:#0d0d0d;text-align:right;-webkit-text-stroke:0.2px #0d0d0d">1.45</div>
<div class="a" style="left:169px;top:351px;width:683px;height:1px;background:#e9e9e9"></div>
<div class="a nw" style="left:179.5px;top:362.47px;font-size:12.8px;line-height:16px;font-weight:400;color:#333;-webkit-text-stroke:0.3px currentColor">2-й тайм</div>
<svg class="a" style="left:275px;top:365.0px" width="11" height="7" viewBox="0 0 11 7"><path d="M1 1 L5.5 5.5 L10 1" fill="none" stroke="#555" stroke-width="1.2"/></svg>
<div class="a" style="left:295.0px;top:351px;width:1px;height:35px;background:#e9e9e9"></div>
<div class="a" style="left:560.8px;top:351px;width:1px;height:35px;background:#e9e9e9"></div>
<div class="a" style="left:724.8px;top:351px;width:1px;height:35px;background:#e9e9e9"></div>
<div class="a" style="left:339.5px;top:359px;width:1px;height:21px;background:#efefef"></div>
<div class="a" style="left:383.7px;top:359px;width:1px;height:21px;background:#efefef"></div>
<div class="a" style="left:428.0px;top:359px;width:1px;height:21px;background:#efefef"></div>
<div class="a" style="left:472.4px;top:359px;width:1px;height:21px;background:#efefef"></div>
<div class="a" style="left:516.6px;top:359px;width:1px;height:21px;background:#efefef"></div>
<div class="a" style="left:643.0px;top:359px;width:1px;height:21px;background:#efefef"></div>
<div class="a" style="left:807.0px;top:359px;width:1px;height:21px;background:#efefef"></div>
<div class="a nw" style="right:800.8px;top:363.77px;font-size:12.2px;line-height:15px;font-weight:700;color:#0d0d0d;text-align:right;-webkit-text-stroke:0.2px #0d0d0d">1.80</div>
<div class="a nw" style="right:756.6px;top:363.77px;font-size:12.2px;line-height:15px;font-weight:700;color:#0d0d0d;text-align:right;-webkit-text-stroke:0.2px #0d0d0d">2.80</div>
<div class="a nw" style="right:712.3px;top:363.77px;font-size:12.2px;line-height:15px;font-weight:700;color:#0d0d0d;text-align:right;-webkit-text-stroke:0.2px #0d0d0d">5.80</div>
<div class="a nw" style="right:667.9000000000001px;top:363.77px;font-size:12.2px;line-height:15px;font-weight:700;color:#0d0d0d;text-align:right;-webkit-text-stroke:0.2px #0d0d0d">1.10</div>
<div class="a nw" style="right:623.7px;top:363.77px;font-size:12.2px;line-height:15px;font-weight:700;color:#0d0d0d;text-align:right;-webkit-text-stroke:0.2px #0d0d0d">1.38</div>
<div class="a nw" style="right:579.5px;top:363.77px;font-size:12.2px;line-height:15px;font-weight:700;color:#0d0d0d;text-align:right;-webkit-text-stroke:0.2px #0d0d0d">1.90</div>
<div class="a nw" style="left:566.8px;top:364.50px;font-size:11.5px;line-height:14px;font-weight:400;color:#b3b3b3;">0</div>
<div class="a nw" style="right:497.29999999999995px;top:363.77px;font-size:12.2px;line-height:15px;font-weight:700;color:#0d0d0d;text-align:right;-webkit-text-stroke:0.2px #0d0d0d">1.25</div>
<div class="a nw" style="left:648.8px;top:364.50px;font-size:11.5px;line-height:14px;font-weight:400;color:#b3b3b3;">0</div>
<div class="a nw" style="right:415.29999999999995px;top:363.77px;font-size:12.2px;line-height:15px;font-weight:700;color:#0d0d0d;text-align:right;-webkit-text-stroke:0.2px #0d0d0d">3.60</div>
<div class="a nw" style="left:731.0px;top:364.50px;font-size:11.5px;line-height:14px;font-weight:400;color:#b3b3b3;">1.5</div>
<div class="a nw" style="right:333.29999999999995px;top:363.77px;font-size:12.2px;line-height:15px;font-weight:700;color:#0d0d0d;text-align:right;-webkit-text-stroke:0.2px #0d0d0d">2.00</div>
<div class="a nw" style="right:288.4px;top:363.77px;font-size:12.2px;line-height:15px;font-weight:700;color:#0d0d0d;text-align:right;-webkit-text-stroke:0.2px #0d0d0d">1.72</div>
<div class="a" style="left:169px;top:386px;width:683px;height:1px;background:#e9e9e9"></div>
<div class="a nw" style="left:179.5px;top:398.07px;font-size:12.8px;line-height:16px;font-weight:400;color:#333;-webkit-text-stroke:0.3px currentColor">исход</div>
<div class="a nw" style="left:179.5px;top:415.97px;font-size:12.8px;line-height:16px;font-weight:400;color:#333;-webkit-text-stroke:0.3px currentColor">15 минут</div>
<div class="a" style="left:295.0px;top:386px;width:1px;height:53px;background:#e9e9e9"></div>
<div class="a" style="left:560.8px;top:386px;width:1px;height:53px;background:#e9e9e9"></div>
<div class="a" style="left:724.8px;top:386px;width:1px;height:53px;background:#e9e9e9"></div>
<div class="a" style="left:339.5px;top:403px;width:1px;height:21px;background:#efefef"></div>
<div class="a" style="left:383.7px;top:403px;width:1px;height:21px;background:#efefef"></div>
<div class="a" style="left:428.0px;top:403px;width:1px;height:21px;background:#efefef"></div>
<div class="a" style="left:472.4px;top:403px;width:1px;height:21px;background:#efefef"></div>
<div class="a" style="left:516.6px;top:403px;width:1px;height:21px;background:#efefef"></div>
<div class="a" style="left:643.0px;top:403px;width:1px;height:21px;background:#efefef"></div>
<div class="a" style="left:807.0px;top:403px;width:1px;height:21px;background:#efefef"></div>
<div class="a nw" style="right:800.8px;top:407.77px;font-size:12.2px;line-height:15px;font-weight:700;color:#0d0d0d;text-align:right;-webkit-text-stroke:0.2px #0d0d0d">4.00</div>
<div class="a nw" style="right:756.6px;top:407.77px;font-size:12.2px;line-height:15px;font-weight:700;color:#0d0d0d;text-align:right;-webkit-text-stroke:0.2px #0d0d0d">1.32</div>
<div class="a nw" style="right:712.3px;top:407.77px;font-size:12.2px;line-height:15px;font-weight:700;color:#0d0d0d;text-align:right;-webkit-text-stroke:0.2px #0d0d0d">8.50</div>
<div class="a nw" style="right:667.9000000000001px;top:407.77px;font-size:12.2px;line-height:15px;font-weight:700;color:#0d0d0d;text-align:right;-webkit-text-stroke:0.2px #0d0d0d">1.04</div>
<div class="a nw" style="right:623.7px;top:407.77px;font-size:12.2px;line-height:15px;font-weight:700;color:#0d0d0d;text-align:right;-webkit-text-stroke:0.2px #0d0d0d">3.10</div>
<div class="a nw" style="right:579.5px;top:407.77px;font-size:12.2px;line-height:15px;font-weight:700;color:#0d0d0d;text-align:right;-webkit-text-stroke:0.2px #0d0d0d">1.20</div>
<div class="a nw" style="left:566.8px;top:408.50px;font-size:11.5px;line-height:14px;font-weight:400;color:#b3b3b3;">0</div>
<div class="a nw" style="right:497.29999999999995px;top:407.77px;font-size:12.2px;line-height:15px;font-weight:700;color:#0d0d0d;text-align:right;-webkit-text-stroke:0.2px #0d0d0d">1.25</div>
<div class="a nw" style="left:648.8px;top:408.50px;font-size:11.5px;line-height:14px;font-weight:400;color:#b3b3b3;">0</div>
<div class="a nw" style="right:415.29999999999995px;top:407.77px;font-size:12.2px;line-height:15px;font-weight:700;color:#0d0d0d;text-align:right;-webkit-text-stroke:0.2px #0d0d0d">3.45</div>
<div class="a nw" style="left:731.0px;top:408.50px;font-size:11.5px;line-height:14px;font-weight:400;color:#b3b3b3;">0.5</div>
<div class="a nw" style="right:333.29999999999995px;top:407.77px;font-size:12.2px;line-height:15px;font-weight:700;color:#0d0d0d;text-align:right;-webkit-text-stroke:0.2px #0d0d0d">2.95</div>
<div class="a nw" style="right:288.4px;top:407.77px;font-size:12.2px;line-height:15px;font-weight:700;color:#0d0d0d;text-align:right;-webkit-text-stroke:0.2px #0d0d0d">1.35</div>
<div class="a" style="left:169px;top:439px;width:683px;height:1px;background:#e9e9e9"></div>
<div class="a nw" style="left:179.5px;top:451.07px;font-size:12.8px;line-height:16px;font-weight:400;color:#333;-webkit-text-stroke:0.3px currentColor">исход</div>
<div class="a nw" style="left:179.5px;top:468.97px;font-size:12.8px;line-height:16px;font-weight:400;color:#333;-webkit-text-stroke:0.3px currentColor">30 минут</div>
<div class="a" style="left:295.0px;top:439px;width:1px;height:53px;background:#e9e9e9"></div>
<div class="a" style="left:560.8px;top:439px;width:1px;height:53px;background:#e9e9e9"></div>
<div class="a" style="left:724.8px;top:439px;width:1px;height:53px;background:#e9e9e9"></div>
<div class="a" style="left:339.5px;top:456px;width:1px;height:21px;background:#efefef"></div>
<div class="a" style="left:383.7px;top:456px;width:1px;height:21px;background:#efefef"></div>
<div class="a" style="left:428.0px;top:456px;width:1px;height:21px;background:#efefef"></div>
<div class="a" style="left:472.4px;top:456px;width:1px;height:21px;background:#efefef"></div>
<div class="a" style="left:516.6px;top:456px;width:1px;height:21px;background:#efefef"></div>
<div class="a" style="left:643.0px;top:456px;width:1px;height:21px;background:#efefef"></div>
<div class="a" style="left:807.0px;top:456px;width:1px;height:21px;background:#efefef"></div>
<div class="a nw" style="right:800.8px;top:460.77px;font-size:12.2px;line-height:15px;font-weight:700;color:#0d0d0d;text-align:right;-webkit-text-stroke:0.2px #0d0d0d">2.50</div>
<div class="a nw" style="right:756.6px;top:460.77px;font-size:12.2px;line-height:15px;font-weight:700;color:#0d0d0d;text-align:right;-webkit-text-stroke:0.2px #0d0d0d">1.75</div>
<div class="a nw" style="right:712.3px;top:460.77px;font-size:12.2px;line-height:15px;font-weight:700;color:#0d0d0d;text-align:right;-webkit-text-stroke:0.2px #0d0d0d">6.30</div>
<div class="a nw" style="right:667.9000000000001px;top:460.77px;font-size:12.2px;line-height:15px;font-weight:700;color:#0d0d0d;text-align:right;-webkit-text-stroke:0.2px #0d0d0d">1.08</div>
<div class="a nw" style="right:623.7px;top:460.77px;font-size:12.2px;line-height:15px;font-weight:700;color:#0d0d0d;text-align:right;-webkit-text-stroke:0.2px #0d0d0d">1.95</div>
<div class="a nw" style="right:579.5px;top:460.77px;font-size:12.2px;line-height:15px;font-weight:700;color:#0d0d0d;text-align:right;-webkit-text-stroke:0.2px #0d0d0d">1.47</div>
<div class="a nw" style="left:566.8px;top:461.50px;font-size:11.5px;line-height:14px;font-weight:400;color:#b3b3b3;">0</div>
<div class="a nw" style="right:497.29999999999995px;top:460.77px;font-size:12.2px;line-height:15px;font-weight:700;color:#0d0d0d;text-align:right;-webkit-text-stroke:0.2px #0d0d0d">1.25</div>
<div class="a nw" style="left:648.8px;top:461.50px;font-size:11.5px;line-height:14px;font-weight:400;color:#b3b3b3;">0</div>
<div class="a nw" style="right:415.29999999999995px;top:460.77px;font-size:12.2px;line-height:15px;font-weight:700;color:#0d0d0d;text-align:right;-webkit-text-stroke:0.2px #0d0d0d">3.55</div>
<div class="a nw" style="left:731.0px;top:461.50px;font-size:11.5px;line-height:14px;font-weight:400;color:#b3b3b3;">0.5</div>
<div class="a nw" style="right:333.29999999999995px;top:460.77px;font-size:12.2px;line-height:15px;font-weight:700;color:#0d0d0d;text-align:right;-webkit-text-stroke:0.2px #0d0d0d">1.75</div>
<div class="a nw" style="right:288.4px;top:460.77px;font-size:12.2px;line-height:15px;font-weight:700;color:#0d0d0d;text-align:right;-webkit-text-stroke:0.2px #0d0d0d">1.95</div>
<div class="a" style="left:169px;top:492px;width:683px;height:1px;background:#e9e9e9"></div>
<div class="a nw" style="left:179.5px;top:504.07px;font-size:12.8px;line-height:16px;font-weight:400;color:#333;-webkit-text-stroke:0.3px currentColor">исход</div>
<div class="a nw" style="left:179.5px;top:521.97px;font-size:12.8px;line-height:16px;font-weight:400;color:#333;-webkit-text-stroke:0.3px currentColor">60 минут</div>
<div class="a" style="left:295.0px;top:492px;width:1px;height:53px;background:#e9e9e9"></div>
<div class="a" style="left:560.8px;top:492px;width:1px;height:53px;background:#e9e9e9"></div>
<div class="a" style="left:724.8px;top:492px;width:1px;height:53px;background:#e9e9e9"></div>
<div class="a" style="left:339.5px;top:509px;width:1px;height:21px;background:#efefef"></div>
<div class="a" style="left:383.7px;top:509px;width:1px;height:21px;background:#efefef"></div>
<div class="a" style="left:428.0px;top:509px;width:1px;height:21px;background:#efefef"></div>
<div class="a" style="left:472.4px;top:509px;width:1px;height:21px;background:#efefef"></div>
<div class="a" style="left:516.6px;top:509px;width:1px;height:21px;background:#efefef"></div>
<div class="a" style="left:643.0px;top:509px;width:1px;height:21px;background:#efefef"></div>
<div class="a" style="left:807.0px;top:509px;width:1px;height:21px;background:#efefef"></div>
<div class="a nw" style="right:800.8px;top:513.77px;font-size:12.2px;line-height:15px;font-weight:700;color:#0d0d0d;text-align:right;-webkit-text-stroke:0.2px #0d0d0d">1.70</div>
<div class="a nw" style="right:756.6px;top:513.77px;font-size:12.2px;line-height:15px;font-weight:700;color:#0d0d0d;text-align:right;-webkit-text-stroke:0.2px #0d0d0d">2.80</div>
<div class="a nw" style="right:712.3px;top:513.77px;font-size:12.2px;line-height:15px;font-weight:700;color:#0d0d0d;text-align:right;-webkit-text-stroke:0.2px #0d0d0d">5.50</div>
<div class="a nw" style="right:667.9000000000001px;top:513.77px;font-size:12.2px;line-height:15px;font-weight:700;color:#0d0d0d;text-align:right;-webkit-text-stroke:0.2px #0d0d0d">1.11</div>
<div class="a nw" style="right:623.7px;top:513.77px;font-size:12.2px;line-height:15px;font-weight:700;color:#0d0d0d;text-align:right;-webkit-text-stroke:0.2px #0d0d0d">1.38</div>
<div class="a nw" style="right:579.5px;top:513.77px;font-size:12.2px;line-height:15px;font-weight:700;color:#0d0d0d;text-align:right;-webkit-text-stroke:0.2px #0d0d0d">2.03</div>
<div class="a nw" style="left:566.8px;top:514.50px;font-size:11.5px;line-height:14px;font-weight:400;color:#b3b3b3;">-1.5</div>
<div class="a nw" style="right:497.29999999999995px;top:513.77px;font-size:12.2px;line-height:15px;font-weight:700;color:#0d0d0d;text-align:right;-webkit-text-stroke:0.2px #0d0d0d">3.45</div>
<div class="a nw" style="left:648.8px;top:514.50px;font-size:11.5px;line-height:14px;font-weight:400;color:#b3b3b3;">+1.5</div>
<div class="a nw" style="right:415.29999999999995px;top:513.77px;font-size:12.2px;line-height:15px;font-weight:700;color:#0d0d0d;text-align:right;-webkit-text-stroke:0.2px #0d0d0d">1.25</div>
<div class="a nw" style="left:731.0px;top:514.50px;font-size:11.5px;line-height:14px;font-weight:400;color:#b3b3b3;">1.5</div>
<div class="a nw" style="right:333.29999999999995px;top:513.77px;font-size:12.2px;line-height:15px;font-weight:700;color:#0d0d0d;text-align:right;-webkit-text-stroke:0.2px #0d0d0d">1.85</div>
<div class="a nw" style="right:288.4px;top:513.77px;font-size:12.2px;line-height:15px;font-weight:700;color:#0d0d0d;text-align:right;-webkit-text-stroke:0.2px #0d0d0d">1.85</div>
<div class="a" style="left:169px;top:545px;width:683px;height:1px;background:#e9e9e9"></div>
<div class="a nw" style="left:179.5px;top:557.07px;font-size:12.8px;line-height:16px;font-weight:400;color:#333;-webkit-text-stroke:0.3px currentColor">исход</div>
<div class="a nw" style="left:179.5px;top:574.97px;font-size:12.8px;line-height:16px;font-weight:400;color:#333;-webkit-text-stroke:0.3px currentColor">75 минут</div>
<div class="a" style="left:295.0px;top:545px;width:1px;height:54px;background:#e9e9e9"></div>
<div class="a" style="left:560.8px;top:545px;width:1px;height:54px;background:#e9e9e9"></div>
<div class="a" style="left:724.8px;top:545px;width:1px;height:54px;background:#e9e9e9"></div>
<div class="a" style="left:339.5px;top:562px;width:1px;height:21px;background:#efefef"></div>
<div class="a" style="left:383.7px;top:562px;width:1px;height:21px;background:#efefef"></div>
<div class="a" style="left:428.0px;top:562px;width:1px;height:21px;background:#efefef"></div>
<div class="a" style="left:472.4px;top:562px;width:1px;height:21px;background:#efefef"></div>
<div class="a" style="left:516.6px;top:562px;width:1px;height:21px;background:#efefef"></div>
<div class="a" style="left:643.0px;top:562px;width:1px;height:21px;background:#efefef"></div>
<div class="a" style="left:807.0px;top:562px;width:1px;height:21px;background:#efefef"></div>
<div class="a nw" style="right:800.8px;top:567.27px;font-size:12.2px;line-height:15px;font-weight:700;color:#0d0d0d;text-align:right;-webkit-text-stroke:0.2px #0d0d0d">1.50</div>
<div class="a nw" style="right:756.6px;top:567.27px;font-size:12.2px;line-height:15px;font-weight:700;color:#0d0d0d;text-align:right;-webkit-text-stroke:0.2px #0d0d0d">3.20</div>
<div class="a nw" style="right:712.3px;top:567.27px;font-size:12.2px;line-height:15px;font-weight:700;color:#0d0d0d;text-align:right;-webkit-text-stroke:0.2px #0d0d0d">5.50</div>
<div class="a nw" style="right:667.9000000000001px;top:567.27px;font-size:12.2px;line-height:15px;font-weight:700;color:#0d0d0d;text-align:right;-webkit-text-stroke:0.2px #0d0d0d">1.11</div>
<div class="a nw" style="right:623.7px;top:567.27px;font-size:12.2px;line-height:15px;font-weight:700;color:#0d0d0d;text-align:right;-webkit-text-stroke:0.2px #0d0d0d">1.30</div>
<div class="a nw" style="right:579.5px;top:567.27px;font-size:12.2px;line-height:15px;font-weight:700;color:#0d0d0d;text-align:right;-webkit-text-stroke:0.2px #0d0d0d">2.25</div>
<div class="a nw" style="left:566.8px;top:568.00px;font-size:11.5px;line-height:14px;font-weight:400;color:#b3b3b3;">-1</div>
<div class="a nw" style="right:497.29999999999995px;top:567.27px;font-size:12.2px;line-height:15px;font-weight:700;color:#0d0d0d;text-align:right;-webkit-text-stroke:0.2px #0d0d0d">2.10</div>
<div class="a nw" style="left:648.8px;top:568.00px;font-size:11.5px;line-height:14px;font-weight:400;color:#b3b3b3;">+1</div>
<div class="a nw" style="right:415.29999999999995px;top:567.27px;font-size:12.2px;line-height:15px;font-weight:700;color:#0d0d0d;text-align:right;-webkit-text-stroke:0.2px #0d0d0d">1.65</div>
<div class="a nw" style="left:731.0px;top:568.00px;font-size:11.5px;line-height:14px;font-weight:400;color:#b3b3b3;">1.5</div>
<div class="a nw" style="right:333.29999999999995px;top:567.27px;font-size:12.2px;line-height:15px;font-weight:700;color:#0d0d0d;text-align:right;-webkit-text-stroke:0.2px #0d0d0d">1.50</div>
<div class="a nw" style="right:288.4px;top:567.27px;font-size:12.2px;line-height:15px;font-weight:700;color:#0d0d0d;text-align:right;-webkit-text-stroke:0.2px #0d0d0d">2.45</div>
<div class="a" style="left:169px;top:599px;width:683px;height:26px;background:#6aab5e"></div>
<div class="a nw" style="left:179.3px;top:606.93px;font-size:10.2px;line-height:13px;font-weight:700;color:#fff;-webkit-text-stroke:0.15px #fff">ФУТБОЛ</div>
<div class="a nw" style="left:228.8px;top:606.20px;font-size:10.9px;line-height:14px;font-weight:400;color:#f1f7ee;-webkit-text-stroke:0.3px #f1f7ee">Болгария. Суперлига</div>
<div class="a nw" style="left:179.7px;top:637.77px;font-size:11.6px;line-height:14px;font-weight:400;color:#a0a0a0;-webkit-text-stroke:0.3px currentColor">30.11 18:30</div>
<div class="a nw" style="left:254.6px;top:635.71px;font-size:13.9px;line-height:17px;font-weight:700;color:#0d0d0d;-webkit-text-stroke:0.35px #0d0d0d">ЦСКА София - Септември София</div>
<svg class="a" style="left:823.6px;top:631.9px" width="22" height="22" viewBox="0 0 22 22"><circle cx="11" cy="11" r="9.6" fill="#fff" stroke="#666" stroke-width="1.1"/><path d="M11.00 6.80 L12.18 9.78 L15.37 9.98 L12.90 12.02 L13.70 15.12 L11.00 13.40 L8.30 15.12 L9.10 12.02 L6.63 9.98 L9.82 9.78 Z" fill="#5a5a5a" stroke="#5a5a5a" stroke-width="0.7" stroke-linejoin="round"/></svg>
<div class="a" style="left:169px;top:660px;width:683px;height:1px;background:#e9e9e9"></div>
<div class="a" style="left:340.0px;top:660px;width:44.19999999999999px;height:35px;background:#efefef"></div>
<div class="a nw" style="left:179.5px;top:671.47px;font-size:12.8px;line-height:16px;font-weight:400;color:#333;-webkit-text-stroke:0.3px currentColor">Матч</div>
<svg class="a" style="left:275px;top:674.0px" width="11" height="7" viewBox="0 0 11 7"><path d="M1 1 L5.5 5.5 L10 1" fill="none" stroke="#555" stroke-width="1.2"/></svg>
<div class="a" style="left:295.0px;top:660px;width:1px;height:35px;background:#e9e9e9"></div>
<div class="a" style="left:560.8px;top:660px;width:1px;height:35px;background:#e9e9e9"></div>
<div class="a" style="left:724.8px;top:660px;width:1px;height:35px;background:#e9e9e9"></div>
<div class="a" style="left:339.5px;top:668px;width:1px;height:21px;background:#efefef"></div>
<div class="a" style="left:383.7px;top:668px;width:1px;height:21px;background:#efefef"></div>
<div class="a" style="left:428.0px;top:668px;width:1px;height:21px;background:#efefef"></div>
<div class="a" style="left:472.4px;top:668px;width:1px;height:21px;background:#efefef"></div>
<div class="a" style="left:516.6px;top:668px;width:1px;height:21px;background:#efefef"></div>
<div class="a" style="left:643.0px;top:668px;width:1px;height:21px;background:#efefef"></div>
<div class="a" style="left:807.0px;top:668px;width:1px;height:21px;background:#efefef"></div>
<div class="a nw" style="right:800.8px;top:672.77px;font-size:12.2px;line-height:15px;font-weight:700;color:#0d0d0d;text-align:right;-webkit-text-stroke:0.2px #0d0d0d">1.15</div>
<div class="a nw" style="right:756.6px;top:672.77px;font-size:12.2px;line-height:15px;font-weight:700;color:#0d0d0d;text-align:right;-webkit-text-stroke:0.2px #0d0d0d">7.00</div>
<div class="a nw" style="right:712.3px;top:672.77px;font-size:12.2px;line-height:15px;font-weight:700;color:#0d0d0d;text-align:right;-webkit-text-stroke:0.2px #0d0d0d">15.00</div>
<div class="a nw" style="right:667.9000000000001px;top:672.77px;font-size:12.2px;line-height:15px;font-weight:700;color:#0d0d0d;text-align:right;-webkit-text-stroke:0.2px #0d0d0d">1.01</div>
<div class="a nw" style="right:623.7px;top:672.77px;font-size:12.2px;line-height:15px;font-weight:700;color:#0d0d0d;text-align:right;-webkit-text-stroke:0.2px #0d0d0d">1.07</div>
<div class="a nw" style="right:579.5px;top:672.77px;font-size:12.2px;line-height:15px;font-weight:700;color:#0d0d0d;text-align:right;-webkit-text-stroke:0.2px #0d0d0d">4.70</div>
<div class="a nw" style="left:566.8px;top:673.50px;font-size:11.5px;line-height:14px;font-weight:400;color:#b3b3b3;">-2.5</div>
<div class="a nw" style="right:497.29999999999995px;top:672.77px;font-size:12.2px;line-height:15px;font-weight:700;color:#0d0d0d;text-align:right;-webkit-text-stroke:0.2px #0d0d0d">2.20</div>
<div class="a nw" style="left:648.8px;top:673.50px;font-size:11.5px;line-height:14px;font-weight:400;color:#b3b3b3;">+2.5</div>
<div class="a nw" style="right:415.29999999999995px;top:672.77px;font-size:12.2px;line-height:15px;font-weight:700;color:#0d0d0d;text-align:right;-webkit-text-stroke:0.2px #0d0d0d">1.60</div>
<div class="a nw" style="left:731.0px;top:673.50px;font-size:11.5px;line-height:14px;font-weight:400;color:#b3b3b3;">3.5</div>
<div class="a nw" style="right:333.29999999999995px;top:672.77px;font-size:12.2px;line-height:15px;font-weight:700;color:#0d0d0d;text-align:right;-webkit-text-stroke:0.2px #0d0d0d">2.00</div>
<div class="a nw" style="right:288.4px;top:672.77px;font-size:12.2px;line-height:15px;font-weight:700;color:#0d0d0d;text-align:right;-webkit-text-stroke:0.2px #0d0d0d">1.72</div>
<div class="a" style="left:169px;top:695px;width:683px;height:1px;background:#e9e9e9"></div>
<div class="a nw" style="left:179.5px;top:706.47px;font-size:12.8px;line-height:16px;font-weight:400;color:#333;-webkit-text-stroke:0.3px currentColor">1-й тайм</div>
<svg class="a" style="left:275px;top:709.0px" width="11" height="7" viewBox="0 0 11 7"><path d="M1 1 L5.5 5.5 L10 1" fill="none" stroke="#555" stroke-width="1.2"/></svg>
<div class="a" style="left:295.0px;top:695px;width:1px;height:35px;background:#e9e9e9"></div>
<div class="a" style="left:560.8px;top:695px;width:1px;height:35px;background:#e9e9e9"></div>
<div class="a" style="left:724.8px;top:695px;width:1px;height:35px;background:#e9e9e9"></div>
<div class="a" style="left:339.5px;top:703px;width:1px;height:21px;background:#efefef"></div>
<div class="a" style="left:383.7px;top:703px;width:1px;height:21px;background:#efefef"></div>
<div class="a" style="left:428.0px;top:703px;width:1px;height:21px;background:#efefef"></div>
<div class="a" style="left:472.4px;top:703px;width:1px;height:21px;background:#efefef"></div>
<div class="a" style="left:516.6px;top:703px;width:1px;height:21px;background:#efefef"></div>
<div class="a" style="left:643.0px;top:703px;width:1px;height:21px;background:#efefef"></div>
<div class="a" style="left:807.0px;top:703px;width:1px;height:21px;background:#efefef"></div>
<div class="a nw" style="right:800.8px;top:707.77px;font-size:12.2px;line-height:15px;font-weight:700;color:#0d0d0d;text-align:right;-webkit-text-stroke:0.2px #0d0d0d">1.50</div>
<div class="a nw" style="right:756.6px;top:707.77px;font-size:12.2px;line-height:15px;font-weight:700;color:#0d0d0d;text-align:right;-webkit-text-stroke:0.2px #0d0d0d">3.00</div>
<div class="a nw" style="right:712.3px;top:707.77px;font-size:12.2px;line-height:15px;font-weight:700;color:#0d0d0d;text-align:right;-webkit-text-stroke:0.2px #0d0d0d">11.50</div>
<div class="a nw" style="right:667.9000000000001px;top:707.77px;font-size:12.2px;line-height:15px;font-weight:700;color:#0d0d0d;text-align:right;-webkit-text-stroke:0.2px #0d0d0d">1.01</div>
<div class="a nw" style="right:623.7px;top:707.77px;font-size:12.2px;line-height:15px;font-weight:700;color:#0d0d0d;text-align:right;-webkit-text-stroke:0.2px #0d0d0d">1.35</div>
<div class="a nw" style="right:579.5px;top:707.77px;font-size:12.2px;line-height:15px;font-weight:700;color:#0d0d0d;text-align:right;-webkit-text-stroke:0.2px #0d0d0d">2.40</div>
<div class="a nw" style="left:566.8px;top:708.50px;font-size:11.5px;line-height:14px;font-weight:400;color:#b3b3b3;">-1.5</div>
<div class="a nw" style="right:497.29999999999995px;top:707.77px;font-size:12.2px;line-height:15px;font-weight:700;color:#0d0d0d;text-align:right;-webkit-text-stroke:0.2px #0d0d0d">2.95</div>
<div class="a nw" style="left:648.8px;top:708.50px;font-size:11.5px;line-height:14px;font-weight:400;color:#b3b3b3;">+1.5</div>
<div class="a nw" style="right:415.29999999999995px;top:707.77px;font-size:12.2px;line-height:15px;font-weight:700;color:#0d0d0d;text-align:right;-webkit-text-stroke:0.2px #0d0d0d">1.35</div>
<div class="a nw" style="left:731.0px;top:708.50px;font-size:11.5px;line-height:14px;font-weight:400;color:#b3b3b3;">1.5</div>
<div class="a nw" style="right:333.29999999999995px;top:707.77px;font-size:12.2px;line-height:15px;font-weight:700;color:#0d0d0d;text-align:right;-webkit-text-stroke:0.2px #0d0d0d">2.03</div>
<div class="a nw" style="right:288.4px;top:707.77px;font-size:12.2px;line-height:15px;font-weight:700;color:#0d0d0d;text-align:right;-webkit-text-stroke:0.2px #0d0d0d">1.70</div>
<div class="a" style="left:169px;top:730px;width:683px;height:1px;background:#e9e9e9"></div>
<div class="a" style="left:295.0px;top:730px;width:1px;height:5px;background:#e9e9e9"></div>
<div class="a" style="left:560.8px;top:730px;width:1px;height:5px;background:#e9e9e9"></div>
<div class="a" style="left:724.8px;top:730px;width:1px;height:5px;background:#e9e9e9"></div>
<div class="a" style="left:852.0px;top:92px;width:1px;height:643px;background:#e2e2e2"></div>
<div class="a" style="left:853px;top:38px;width:280px;height:40px;background:#2b0304"></div>
<div class="a nw" style="left:867px;top:53.40px;font-size:10px;line-height:12px;font-weight:700;color:#f2e4e4;">ПАРИ</div>
<svg class="a" style="left:1104px;top:53px" width="14" height="9" viewBox="0 0 14 9"><path d="M1 7.5 L7 1.5 L13 7.5" fill="none" stroke="#8c7474" stroke-width="1.2"/></svg>
<div class="a" style="left:857px;top:85px;width:270px;height:83.5px;background:#fff;border-radius:3px;box-shadow:0 0.5px 2px rgba(0,0,0,0.28);overflow:hidden"><div style="position:absolute;left:0;top:0;width:5.8px;height:100%;background:#2f4c2b"></div></div>
<svg class="a" style="left:870.7px;top:97px" width="22" height="22" viewBox="0 0 22 22"><g transform="translate(1 1)"><circle cx="10" cy="10" r="10.00" fill="#111"/><path d="M10.00 6.22 L13.60 8.83 L12.22 13.06 L7.78 13.06 L6.40 8.83 Z" fill="#fff" stroke="#fff" stroke-width="0.90" stroke-linejoin="round"/><ellipse cx="14.00" cy="4.50" rx="2.15" ry="3.05" transform="rotate(-54.0 14.00 4.50)" fill="#fff"/><ellipse cx="16.47" cy="12.10" rx="2.15" ry="3.05" transform="rotate(18.0 16.47 12.10)" fill="#fff"/><ellipse cx="10.00" cy="16.80" rx="2.15" ry="3.05" transform="rotate(90.0 10.00 16.80)" fill="#fff"/><ellipse cx="3.53" cy="12.10" rx="2.15" ry="3.05" transform="rotate(162.0 3.53 12.10)" fill="#fff"/><ellipse cx="6.00" cy="4.50" rx="2.15" ry="3.05" transform="rotate(234.0 6.00 4.50)" fill="#fff"/></g></svg>
<div class="a nw" style="left:901.5px;top:93.90px;font-size:13px;line-height:16px;font-weight:400;color:#8a8a8a;-webkit-text-stroke:0.3px currentColor">Сегодня в 18:30</div>
<div class="a nw" style="left:901.5px;top:112.24px;font-size:12.9px;line-height:16px;font-weight:400;color:#111;-webkit-text-stroke:0.35px #111">ЦСКА София - Септември София</div>
<div class="a nw" style="left:901.5px;top:130.07px;font-size:12.5px;line-height:16px;font-weight:400;color:#8a8a8a;-webkit-text-stroke:0.3px currentColor">Ставка</div>
<div class="a nw" style="left:949.9px;top:130.04px;font-size:12.6px;line-height:16px;font-weight:700;color:#0d0d0d;-webkit-text-stroke:0.2px #0d0d0d">Ничья</div>
<div class="a nw" style="left:901.5px;top:147.57px;font-size:12.5px;line-height:16px;font-weight:400;color:#8a8a8a;-webkit-text-stroke:0.3px currentColor">Коэффициент</div>
<div class="a nw" style="left:991.3px;top:146.94px;font-size:13.5px;line-height:17px;font-weight:700;color:#0d0d0d;-webkit-text-stroke:0.2px #0d0d0d">7.00</div>
<svg class="a" style="left:1113px;top:92px" width="10" height="10" viewBox="0 0 10 10"><path d="M1 1 L9 9 M9 1 L1 9" stroke="#333" stroke-width="1.3"/></svg>
<div class="a" style="left:857px;top:176px;width:270px;height:83.5px;background:#fff;border-radius:3px;box-shadow:0 0.5px 2px rgba(0,0,0,0.28);overflow:hidden"><div style="position:absolute;left:0;top:0;width:5.8px;height:100%;background:#2f4c2b"></div></div>
<svg class="a" style="left:870.7px;top:188px" width="22" height="22" viewBox="0 0 22 22"><g transform="translate(1 1)"><circle cx="10" cy="10" r="10.00" fill="#111"/><path d="M10.00 6.22 L13.60 8.83 L12.22 13.06 L7.78 13.06 L6.40 8.83 Z" fill="#fff" stroke="#fff" stroke-width="0.90" stroke-linejoin="round"/><ellipse cx="14.00" cy="4.50" rx="2.15" ry="3.05" transform="rotate(-54.0 14.00 4.50)" fill="#fff"/><ellipse cx="16.47" cy="12.10" rx="2.15" ry="3.05" transform="rotate(18.0 16.47 12.10)" fill="#fff"/><ellipse cx="10.00" cy="16.80" rx="2.15" ry="3.05" transform="rotate(90.0 10.00 16.80)" fill="#fff"/><ellipse cx="3.53" cy="12.10" rx="2.15" ry="3.05" transform="rotate(162.0 3.53 12.10)" fill="#fff"/><ellipse cx="6.00" cy="4.50" rx="2.15" ry="3.05" transform="rotate(234.0 6.00 4.50)" fill="#fff"/></g></svg>
<div class="a nw" style="left:901.5px;top:184.90px;font-size:13px;line-height:16px;font-weight:400;color:#8a8a8a;-webkit-text-stroke:0.3px currentColor">Сегодня в 20:00</div>
<div class="a nw" style="left:901.5px;top:203.24px;font-size:12.9px;line-height:16px;font-weight:400;color:#111;-webkit-text-stroke:0.35px #111">Удинезе - Перуджа</div>
<div class="a nw" style="left:901.5px;top:221.07px;font-size:12.5px;line-height:16px;font-weight:400;color:#8a8a8a;-webkit-text-stroke:0.3px currentColor">Ставка</div>
<div class="a nw" style="left:949.9px;top:221.04px;font-size:12.6px;line-height:16px;font-weight:700;color:#0d0d0d;-webkit-text-stroke:0.2px #0d0d0d">Поб 1</div>
<div class="a nw" style="left:901.5px;top:238.57px;font-size:12.5px;line-height:16px;font-weight:400;color:#8a8a8a;-webkit-text-stroke:0.3px currentColor">Коэффициент</div>
<div class="a nw" style="left:991.3px;top:237.94px;font-size:13.5px;line-height:17px;font-weight:700;color:#0d0d0d;-webkit-text-stroke:0.2px #0d0d0d">1.45</div>
<svg class="a" style="left:1113px;top:183px" width="10" height="10" viewBox="0 0 10 10"><path d="M1 1 L9 9 M9 1 L1 9" stroke="#333" stroke-width="1.3"/></svg>
<div class="a" style="left:857px;top:267px;width:270px;height:83.5px;background:#fff;border-radius:3px;box-shadow:0 0.5px 2px rgba(0,0,0,0.28);overflow:hidden"><div style="position:absolute;left:0;top:0;width:5.8px;height:100%;background:#2f4c2b"></div></div>
<svg class="a" style="left:870.7px;top:279px" width="22" height="22" viewBox="0 0 22 22"><g transform="translate(1 1)"><circle cx="10" cy="10" r="10.00" fill="#111"/><path d="M10.00 6.22 L13.60 8.83 L12.22 13.06 L7.78 13.06 L6.40 8.83 Z" fill="#fff" stroke="#fff" stroke-width="0.90" stroke-linejoin="round"/><ellipse cx="14.00" cy="4.50" rx="2.15" ry="3.05" transform="rotate(-54.0 14.00 4.50)" fill="#fff"/><ellipse cx="16.47" cy="12.10" rx="2.15" ry="3.05" transform="rotate(18.0 16.47 12.10)" fill="#fff"/><ellipse cx="10.00" cy="16.80" rx="2.15" ry="3.05" transform="rotate(90.0 10.00 16.80)" fill="#fff"/><ellipse cx="3.53" cy="12.10" rx="2.15" ry="3.05" transform="rotate(162.0 3.53 12.10)" fill="#fff"/><ellipse cx="6.00" cy="4.50" rx="2.15" ry="3.05" transform="rotate(234.0 6.00 4.50)" fill="#fff"/></g></svg>
<div class="a nw" style="left:901.5px;top:275.90px;font-size:13px;line-height:16px;font-weight:400;color:#8a8a8a;-webkit-text-stroke:0.3px currentColor">Сегодня в 20:00</div>
<div class="a nw" style="left:901.5px;top:294.24px;font-size:12.9px;line-height:16px;font-weight:400;color:#111;-webkit-text-stroke:0.35px #111">Удинезе - Эспаньол</div>
<div class="a nw" style="left:901.5px;top:312.07px;font-size:12.5px;line-height:16px;font-weight:400;color:#8a8a8a;-webkit-text-stroke:0.3px currentColor">Ставка</div>
<div class="a nw" style="left:949.9px;top:312.04px;font-size:12.6px;line-height:16px;font-weight:700;color:#0d0d0d;-webkit-text-stroke:0.2px #0d0d0d">Поб 2</div>
<div class="a nw" style="left:901.5px;top:329.57px;font-size:12.5px;line-height:16px;font-weight:400;color:#8a8a8a;-webkit-text-stroke:0.3px currentColor">Коэффициент</div>
<div class="a nw" style="left:991.3px;top:328.94px;font-size:13.5px;line-height:17px;font-weight:700;color:#0d0d0d;-webkit-text-stroke:0.2px #0d0d0d">2.70</div>
<svg class="a" style="left:1113px;top:274px" width="10" height="10" viewBox="0 0 10 10"><path d="M1 1 L9 9 M9 1 L1 9" stroke="#333" stroke-width="1.3"/></svg>
<div class="a" style="left:853px;top:356px;width:280px;height:120px;background:#2b0304"></div>
<div class="a" style="left:946px;top:356px;width:93px;height:2.5px;background:#e3b27a"></div>
<div class="a nw" style="left:875.7px;top:365.76px;font-size:10.4px;line-height:13px;font-weight:700;color:#c8afaf;">ОДИНАР</div>
<div class="a nw" style="left:963px;top:365.76px;font-size:10.4px;line-height:13px;font-weight:700;color:#ffffff;">ЭКСПРЕСС</div>
<div class="a nw" style="left:1059.5px;top:365.76px;font-size:10.4px;line-height:13px;font-weight:700;color:#c8afaf;">СИСТЕМА</div>
<div class="a nw" style="left:862.5px;top:400.91px;font-size:16px;line-height:20px;font-weight:700;color:#fff;-webkit-text-stroke:0.3px #fff">27.41</div>
<div class="a nw" style="left:916px;top:401.04px;font-size:15.6px;line-height:20px;font-weight:400;color:#fff;">1 000 <svg style="display:inline-block;height:0.729em;width:0.6em;vertical-align:0;overflow:visible" viewBox="0 0 10.5 13"><path d="M2.9 13 V0.9 H6.4 C8.7 0.9 9.9 2.5 9.9 4.35 C9.9 6.2 8.7 7.8 6.4 7.8 H0.5 M0.5 10.3 H6.9" fill="none" stroke="currentColor" stroke-width="1.7"/></svg></div>
<div class="a" style="left:914px;top:420px;width:165px;height:1px;background:#b59a9a"></div>
<svg class="a" style="left:1086px;top:395px" width="27" height="27" viewBox="0 0 27 27"><circle cx="13.5" cy="13.5" r="12.3" fill="none" stroke="#fff" stroke-width="1.1"/><path d="M8.5 13.5 H18 M14 9.5 L18 13.5 L14 17.5" fill="none" stroke="#fff" stroke-width="1.1"/></svg>
<div class="a nw" style="left:867px;top:451.99px;font-size:9.7px;line-height:12px;font-weight:700;color:#f4e8e8;">ВСЕ</div>
<div class="a nw" style="left:908px;top:451.98px;font-size:9.75px;line-height:12px;font-weight:700;color:#f4e8e8;">НЕРАССЧИТАННЫЕ</div>
<div class="a" style="left:862px;top:472.5px;width:30.5px;height:3px;background:#e3b27a"></div>
<div class="a nw" style="left:874.5px;top:488.12px;font-size:13.85px;line-height:17px;font-weight:400;color:#222;-webkit-text-stroke:0.3px currentColor">Здесь будет отображаться история</div>
<div class="a nw" style="left:874.5px;top:507.12px;font-size:13.85px;line-height:17px;font-weight:400;color:#222;-webkit-text-stroke:0.3px currentColor">Ваших ставок</div>
<div class="a" style="left:1132px;top:0px;width:1px;height:38px;background:#b09a9a"></div>
<div class="a" style="left:1132px;top:38px;width:1px;height:40px;background:#8a7070"></div>
<div class="a" style="left:1132px;top:78px;width:1px;height:278px;background:#8c8c8c"></div>
<div class="a" style="left:1132px;top:356px;width:1px;height:120px;background:#806868"></div>
<div class="a" style="left:1132px;top:476px;width:1px;height:259px;background:#9c9c9c"></div>
<svg class="a" style="left:0;top:0" width="1133" height="735" viewBox="0 0 1133 735"><path d="M114.90 70.21 L79.15 91.16 L76.79 87.32 L70.50 100.00 L84.65 100.10 L82.29 96.27 L117.10 73.79 Z" fill="#bf0c14" stroke="#7a080c" stroke-width="0.7" stroke-linejoin="round"/><circle cx="126.8" cy="64" r="10.5" fill="#bf0c14" stroke="#7a080c" stroke-width="0.8"/><text x="126.8" y="69.3" text-anchor="middle" font-family="Liberation Sans" font-weight="700" font-size="14.5" fill="#fff">1</text><path d="M166.00 157.90 L112.50 156.90 L112.50 152.75 L101.00 160.00 L112.50 167.25 L112.50 163.10 L166.00 162.10 Z" fill="#bf0c14" stroke="#7a080c" stroke-width="0.7" stroke-linejoin="round"/><circle cx="181" cy="160" r="10.5" fill="#bf0c14" stroke="#7a080c" stroke-width="0.8"/><text x="181" y="165.3" text-anchor="middle" font-family="Liberation Sans" font-weight="700" font-size="14.5" fill="#fff">2</text><path d="M250.00 303.30 L283.00 304.15 L283.00 309.00 L296.00 301.00 L283.00 293.00 L283.00 297.85 L250.00 298.70 Z" fill="#bf0c14" stroke="#7a080c" stroke-width="0.7" stroke-linejoin="round"/><path d="M251.24 302.94 L377.45 223.16 L380.06 227.25 L386.70 213.50 L371.44 213.77 L374.05 217.86 L248.76 299.06 Z" fill="#bf0c14" stroke="#7a080c" stroke-width="0.7" stroke-linejoin="round"/><path d="M247.79 301.64 L348.34 649.40 L343.68 650.76 L355.00 661.00 L359.04 646.28 L354.38 647.64 L252.21 300.36 Z" fill="#bf0c14" stroke="#7a080c" stroke-width="0.7" stroke-linejoin="round"/><circle cx="232" cy="300.7" r="10.5" fill="#bf0c14" stroke="#7a080c" stroke-width="0.8"/><text x="232" y="306.0" text-anchor="middle" font-family="Liberation Sans" font-weight="700" font-size="14.5" fill="#fff">3</text><path d="M1041.04 449.95 L983.63 420.04 L985.81 415.71 L970.60 417.00 L978.61 430.00 L980.79 425.67 L1038.96 454.05 Z" fill="#bf0c14" stroke="#7a080c" stroke-width="0.7" stroke-linejoin="round"/><path d="M1041.30 453.90 L1082.77 426.46 L1085.51 430.45 L1091.70 416.50 L1076.45 417.26 L1079.20 421.26 L1038.70 450.10 Z" fill="#bf0c14" stroke="#7a080c" stroke-width="0.7" stroke-linejoin="round"/><circle cx="1039" cy="467" r="10.5" fill="#bf0c14" stroke="#7a080c" stroke-width="0.8"/><text x="1039" y="472.3" text-anchor="middle" font-family="Liberation Sans" font-weight="700" font-size="14.5" fill="#fff">4</text></svg>
</body></html>
